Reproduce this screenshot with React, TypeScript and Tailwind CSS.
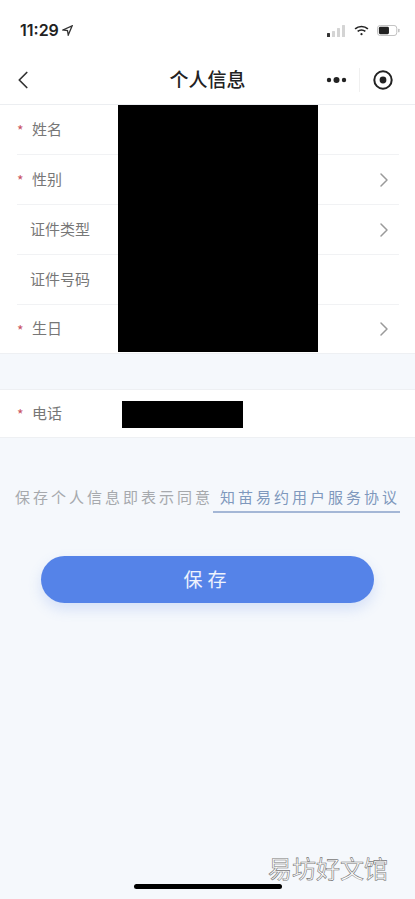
import React from 'react';
import { ChevronLeft, ChevronRight } from 'lucide-react';

const cjk = "font-['Noto_Sans_CJK_SC','Noto_Sans',sans-serif]";

function StatusBar() {
  return (
    <div className="h-[56px] pt-[19px] pl-[20px] pr-[15px] flex justify-between items-start bg-white">
      <div className="flex items-center gap-[3px] text-[16px] leading-[22px] font-semibold text-[#222] font-['Inter',sans-serif]">
        11:29
        <svg width="11" height="11" viewBox="0 0 12 12" fill="none" stroke="#333" strokeWidth="1.4">
          <path d="M11 1 L1 5.4 L6 6.2 L6.8 11 Z" />
        </svg>
      </div>
      <div className="flex items-center gap-[8px] h-[22px] pt-[1px]">
        <svg width="19" height="12" viewBox="0 0 19 12">
          <rect x="0" y="8" width="3" height="4" rx="0.5" fill="#333" />
          <rect x="5" y="6" width="3" height="6" rx="0.5" fill="#d4d4d4" />
          <rect x="10" y="3" width="3" height="9" rx="0.5" fill="#d4d4d4" />
          <rect x="15" y="0" width="3" height="12" rx="0.5" fill="#d4d4d4" />
        </svg>
        <svg width="15" height="11" viewBox="0 0 16 12" fill="none" stroke="#222" strokeWidth="1.8">
          <path d="M1 4.2 C5 0.8 11 0.8 15 4.2" />
          <path d="M3.8 7 C6.2 5 9.8 5 12.2 7" />
          <circle cx="8" cy="10" r="1.2" fill="#222" stroke="none" />
        </svg>
        <svg width="23" height="11" viewBox="0 0 25 12">
          <rect x="0.5" y="0.5" width="21" height="11" rx="3" fill="none" stroke="#bbb" />
          <rect x="2" y="2" width="11" height="8" rx="1.5" fill="#222" />
          <rect x="23" y="4" width="1.5" height="4" rx="0.7" fill="#bbb" />
        </svg>
      </div>
    </div>
  );
}

function NavBar() {
  return (
    <div className="relative h-[49px] flex items-center justify-center bg-white border-b border-[#eceef1]">
      <ChevronLeft size={30} strokeWidth={1.4} color="#333" className="absolute left-[8px] top-[9px]" />
      <span className="text-[19px] font-medium text-[#222] -mt-[2px]">个人信息</span>
      <div className="absolute right-[22px] top-[8px] flex items-center h-[32px]">
        <svg width="21" height="8" viewBox="0 0 21 8" fill="#222">
          <circle cx="3" cy="4" r="2.2" />
          <circle cx="10.5" cy="4" r="3" />
          <circle cx="18" cy="4" r="2.2" />
        </svg>
        <div className="w-px h-[24px] bg-[#f0f0f0] ml-[12px] mr-[13px]" />
        <svg width="20" height="20" viewBox="0 0 20 20">
          <circle cx="10" cy="10" r="8.7" fill="none" stroke="#222" strokeWidth="2" />
          <circle cx="10" cy="10" r="3.4" fill="#222" />
        </svg>
      </div>
    </div>
  );
}

type RowProps = { label: string; required?: boolean; arrow?: boolean; divider?: boolean; height: string };

function Row({ label, required, arrow, divider, height }: RowProps) {
  return (
    <div className={`${height} flex items-center justify-between pr-[3px] ${divider ? 'border-b border-[#f1f2f4]' : ''}`}>
      <div className="flex items-center text-[15px] text-[#777]">
        {required ? (
          <>
            <span className="w-[15px] text-[#c9535f] text-[14px] leading-none mt-[1px]">*</span>
            <span className="-mt-[1px]">{label}</span>
          </>
        ) : (
          <span className="ml-[13px] -mt-[1px]">{label}</span>
        )}
      </div>
      {arrow && <ChevronRight size={24} strokeWidth={1.5} color="#9a9a9a" />}
    </div>
  );
}

export default function App() {
  return (
    <div className={`relative w-[415px] h-[899px] overflow-hidden bg-[#f5f8fc] ${cjk}`}>
      <StatusBar />
      <NavBar />

      <div className="relative bg-white pl-[17px] pr-[16px] border-b border-[#eef0f3]">
        <Row height="h-[50px]" label="姓名" required divider />
        <Row height="h-[50px]" label="性别" required arrow divider />
        <Row height="h-[50px]" label="证件类型" arrow divider />
        <Row height="h-[50px]" label="证件号码" divider />
        <Row height="h-[48px]" label="生日" required arrow />
        <div className="absolute left-[118px] top-0 w-[200px] h-[247px] bg-black" />
      </div>

      <div className="relative mt-[35px] bg-white pl-[17px] pr-[16px] border-y border-[#eef0f3]">
        <Row height="h-[47px]" label="电话" required />
        <div className="absolute left-[122px] top-[11px] w-[121px] h-[27px] bg-black" />
      </div>

      <div className="mt-[49px] pl-[15px] flex items-start text-[15px] tracking-[3px] leading-[20px]">
        <span className="text-[#a6a9ad] whitespace-nowrap">保存个人信息即表示同意</span>
        <span className="pl-[7px] w-[187px] h-[26px] whitespace-nowrap text-[#7f98bd] border-b-2 border-[#a4b7d6]">知苗易约用户服务协议</span>
      </div>

      <button className="block mt-[43px] ml-[41px] w-[333px] h-[47px] rounded-full bg-[#5583e8] text-white/90 text-[19px] tracking-[5px] shadow-[0_6px_14px_rgba(85,131,232,0.2)]">
        保存
      </button>

      <div className="absolute left-[268px] top-[852px] text-[24px] leading-[32px] whitespace-nowrap text-white [-webkit-text-stroke:0.6px_#777]">
        易坊好文馆
      </div>
      <div className="absolute left-[134px] top-[884px] w-[148px] h-[5px] rounded-full bg-black" />
    </div>
  );
}
